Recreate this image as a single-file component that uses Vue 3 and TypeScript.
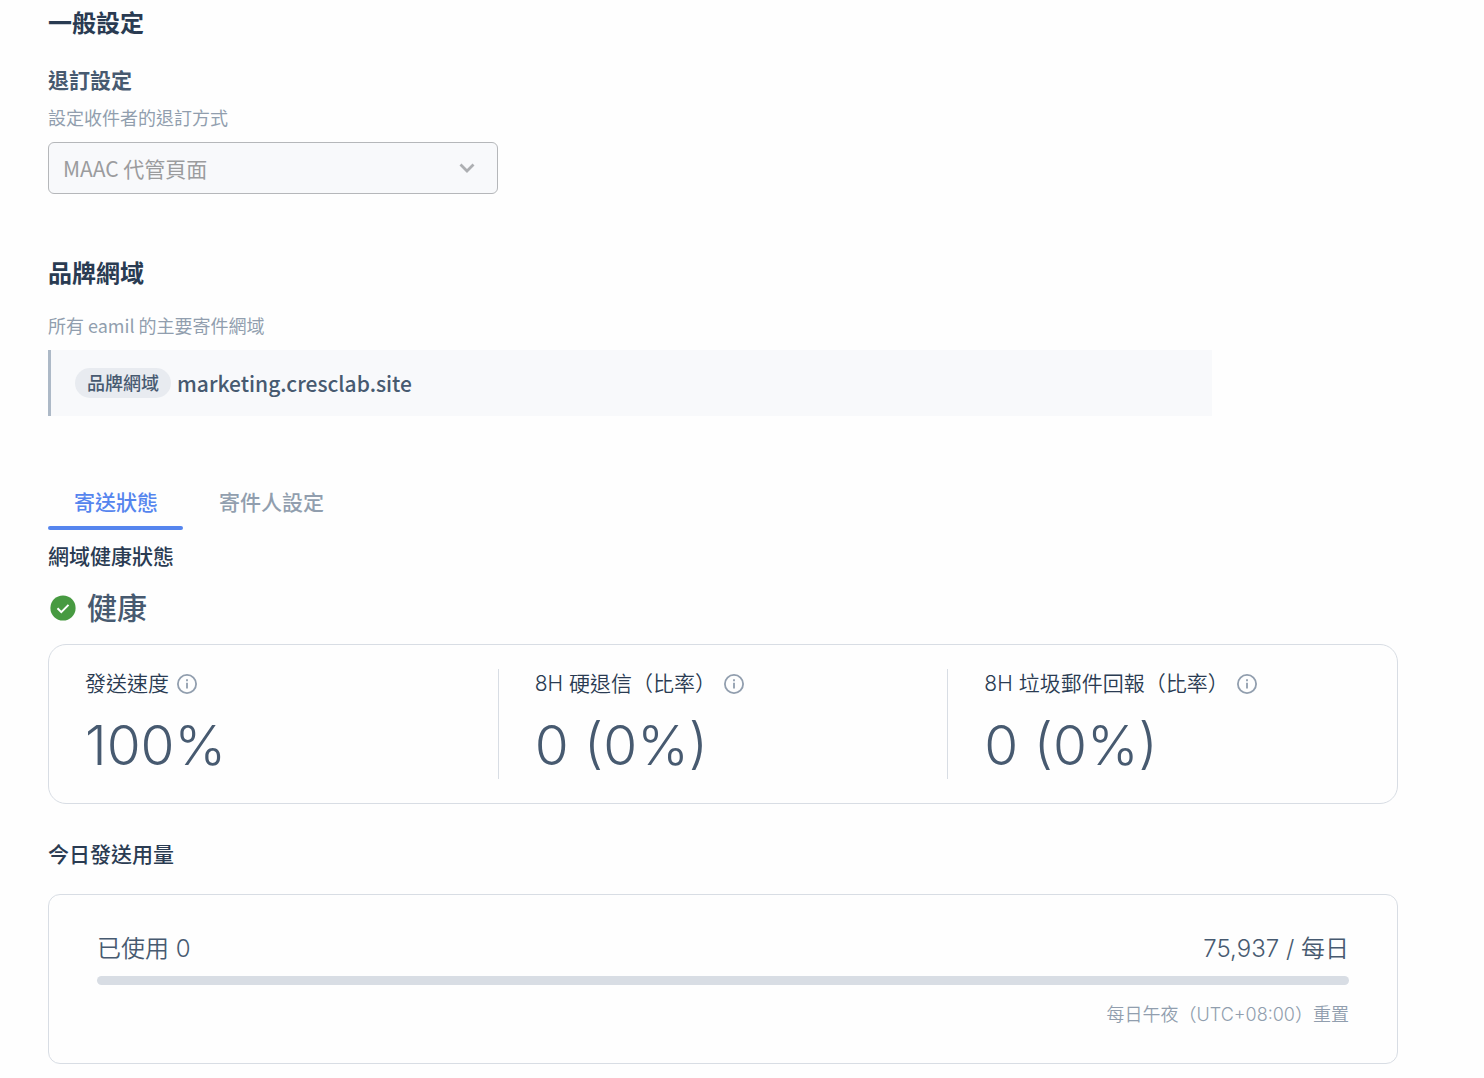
<script setup lang="ts">
import { ref } from 'vue'

interface Metric {
  label: string
  value: string
}

type TabKey = 'status' | 'sender'

const tabs: { key: TabKey; label: string }[] = [
  { key: 'status', label: '寄送狀態' },
  { key: 'sender', label: '寄件人設定' },
]
const activeTab = ref<TabKey>('status')

const metrics: Metric[] = [
  { label: '發送速度', value: '100%' },
  { label: '8H 硬退信（比率）', value: '0 (0%)' },
  { label: '8H 垃圾郵件回報（比率）', value: '0 (0%)' },
]

const used = 0
const dailyLimit = 75937
</script>

<template>
  <main class="page">
    <section class="general">
      <h2 class="title">一般設定</h2>
      <label class="field-title" for="unsubscribe">退訂設定</label>
      <p class="hint">設定收件者的退訂方式</p>
      <div class="select-wrap">
        <select id="unsubscribe" class="select" disabled>
          <option>MAAC 代管頁面</option>
        </select>
        <svg class="chevron" viewBox="0 0 16 10" aria-hidden="true">
          <path d="M1.500 1.500 8 8l6.500-6.500" fill="none" stroke="currentColor" stroke-width="2.800" />
        </svg>
      </div>
    </section>

    <section class="domain">
      <h2 class="title">品牌網域</h2>
      <p class="hint">所有 eamil 的主要寄件網域</p>
      <div class="domain-box">
        <span class="tag">品牌網域</span>
        <span class="domain-name">marketing.cresclab.site</span>
      </div>
    </section>

    <nav class="tabs" role="tablist">
      <button
        v-for="tab in tabs"
        :key="tab.key"
        type="button"
        role="tab"
        class="tab"
        :class="{ active: tab.key === activeTab }"
        :aria-selected="tab.key === activeTab"
        @click="activeTab = tab.key"
      >
        {{ tab.label }}
      </button>
    </nav>

    <section>
      <h3 class="subtitle">網域健康狀態</h3>
      <div class="health">
        <svg class="check" viewBox="0 0 26 26" aria-hidden="true">
          <circle cx="13" cy="13" r="12.600" fill="#479a41" />
          <path d="m7.500 13.300 3.800 3.800 7.200-7.200" fill="none" stroke="#fff" stroke-width="2" />
        </svg>
        <span class="health-text">健康</span>
      </div>
      <div class="metrics">
        <div v-for="metric in metrics" :key="metric.label" class="metric">
          <div class="metric-label">
            <span>{{ metric.label }}</span>
            <svg class="info" viewBox="0 0 20 20" aria-hidden="true">
              <circle cx="10" cy="10" r="9.100" fill="none" stroke="currentColor" stroke-width="1.800" />
              <path d="M10 8.800v5.600M10 5.300v1.900" stroke="currentColor" stroke-width="1.800" />
            </svg>
          </div>
          <div class="metric-value">{{ metric.value }}</div>
        </div>
      </div>
    </section>

    <section class="usage">
      <h3 class="subtitle">今日發送用量</h3>
      <div class="usage-card">
        <div class="usage-row">
          <span>已使用 {{ used }}</span>
          <span>{{ dailyLimit.toLocaleString('en-US') }} / 每日</span>
        </div>
        <div class="bar" role="progressbar" :aria-valuenow="used" :aria-valuemax="dailyLimit">
          <div class="bar-fill" :style="{ width: (used / dailyLimit) * 100 + '%' }"></div>
        </div>
        <p class="hint reset">每日午夜（UTC+08:00）重置</p>
      </div>
    </section>
  </main>
</template>

<style>
body {
  background: #fefefe;
}
</style>

<style scoped>
.page {
  box-sizing: border-box;
  padding: 6px 86px 14px 48px;
  color: #475a70;
  font-family: "Noto Sans CJK TC", sans-serif;
}

h2,
h3,
p {
  margin: 0;
}

.title {
  color: #2a3b52;
  font-size: 24px;
  font-weight: 700;
  line-height: 32px;
}

.field-title {
  display: block;
  margin-top: 27px;
  font-size: 21px;
  font-weight: 700;
  line-height: 28px;
}

.hint {
  margin-top: 12px;
  color: #919eae;
  font-size: 18px;
  line-height: 24px;
}

.select-wrap {
  position: relative;
  width: 450px;
  max-width: 100%;
  margin-top: 13px;
}

.select {
  display: block;
  box-sizing: border-box;
  width: 100%;
  height: 52px;
  padding: 0 48px 0 14px;
  appearance: none;
  border: 1px solid #b5b7ba;
  border-radius: 6px;
  background: #f8f9fb;
  color: #9b9c9e;
  font: 21px "Noto Sans CJK TC", sans-serif;
  opacity: 1;
}

.chevron {
  position: absolute;
  top: 21px;
  right: 23px;
  width: 16px;
  height: 10px;
  color: #adafb2;
}

.domain {
  margin-top: 62px;
}

.domain .hint {
  margin-top: 25px;
}

.domain-box {
  display: flex;
  align-items: center;
  gap: 6px;
  box-sizing: border-box;
  max-width: 1164px;
  margin-top: 13px;
  padding: 18px 24px;
  border-left: 3px solid #adb9c7;
  background: #f8f9fb;
}

.tag {
  padding: 0 12px 2px;
  border-radius: 15px;
  background: #e8ebf0;
  font-size: 18px;
  font-weight: 500;
  line-height: 28px;
}

.domain-name {
  font-size: 21px;
  font-weight: 500;
  line-height: 30px;
}

.tabs {
  display: flex;
  gap: 10px;
  margin-top: 66px;
}

.tab {
  padding: 5px 25px 0 26px;
  border: 0;
  background: none;
  color: #919eae;
  font: 500 21px/28px "Noto Sans CJK TC", sans-serif;
  cursor: pointer;
}

.tab::after {
  content: "";
  display: block;
  height: 4px;
  margin: 11px -25px 0 -26px;
  border-radius: 2px;
}

.tab.active {
  color: #5585ee;
}

.tab.active::after {
  background: #5585ee;
}

.subtitle {
  margin-top: 11px;
  color: #2a3b52;
  font-size: 21px;
  font-weight: 500;
  line-height: 28px;
}

.health {
  display: flex;
  align-items: center;
  gap: 11px;
  margin-top: 17px;
  padding-left: 2px;
}

.health-text {
  padding-bottom: 4px;
  font-size: 30px;
  font-weight: 500;
  line-height: 40px;
}

.check {
  width: 26px;
  height: 26px;
}

.metrics {
  display: flex;
  margin-top: 14px;
  padding: 24px 0;
  border: 1px solid #d8dde4;
  border-radius: 18px;
}

.metric {
  flex: 1;
  box-sizing: border-box;
  height: 110px;
  padding: 1px 0 0 36px;
}

.metric + .metric {
  border-left: 1px solid #d8dde4;
}

.metric-label {
  display: flex;
  align-items: center;
  gap: 8px;
  color: #2a3b52;
  font-family: Inter, "Noto Sans CJK TC", sans-serif;
  font-size: 21px;
  font-weight: 350;
  line-height: 28px;
}

.info {
  width: 20px;
  height: 20px;
  color: #919eae;
}

.metric-value {
  margin-top: 11px;
  font-family: Inter, sans-serif;
  font-size: 55px;
  font-weight: 350;
  line-height: 72px;
}

.usage .subtitle {
  margin-top: 35px;
}

.usage-card {
  margin-top: 27px;
  padding: 38px 48px 36px;
  border: 1px solid #d8dde4;
  border-radius: 12px;
}

.usage-row {
  display: flex;
  justify-content: space-between;
  font-family: Inter, "Noto Sans CJK TC", sans-serif;
  font-size: 24px;
  font-weight: 350;
  line-height: 32px;
}

.bar {
  height: 9px;
  margin-top: 11px;
  border-radius: 5px;
  background: #d8dde4;
  overflow: hidden;
}

.bar-fill {
  height: 100%;
  background: #5585ee;
}

.reset {
  margin-top: 18px;
  font-family: Inter, "Noto Sans CJK TC", sans-serif;
  font-weight: 350;
  text-align: right;
}
</style>
